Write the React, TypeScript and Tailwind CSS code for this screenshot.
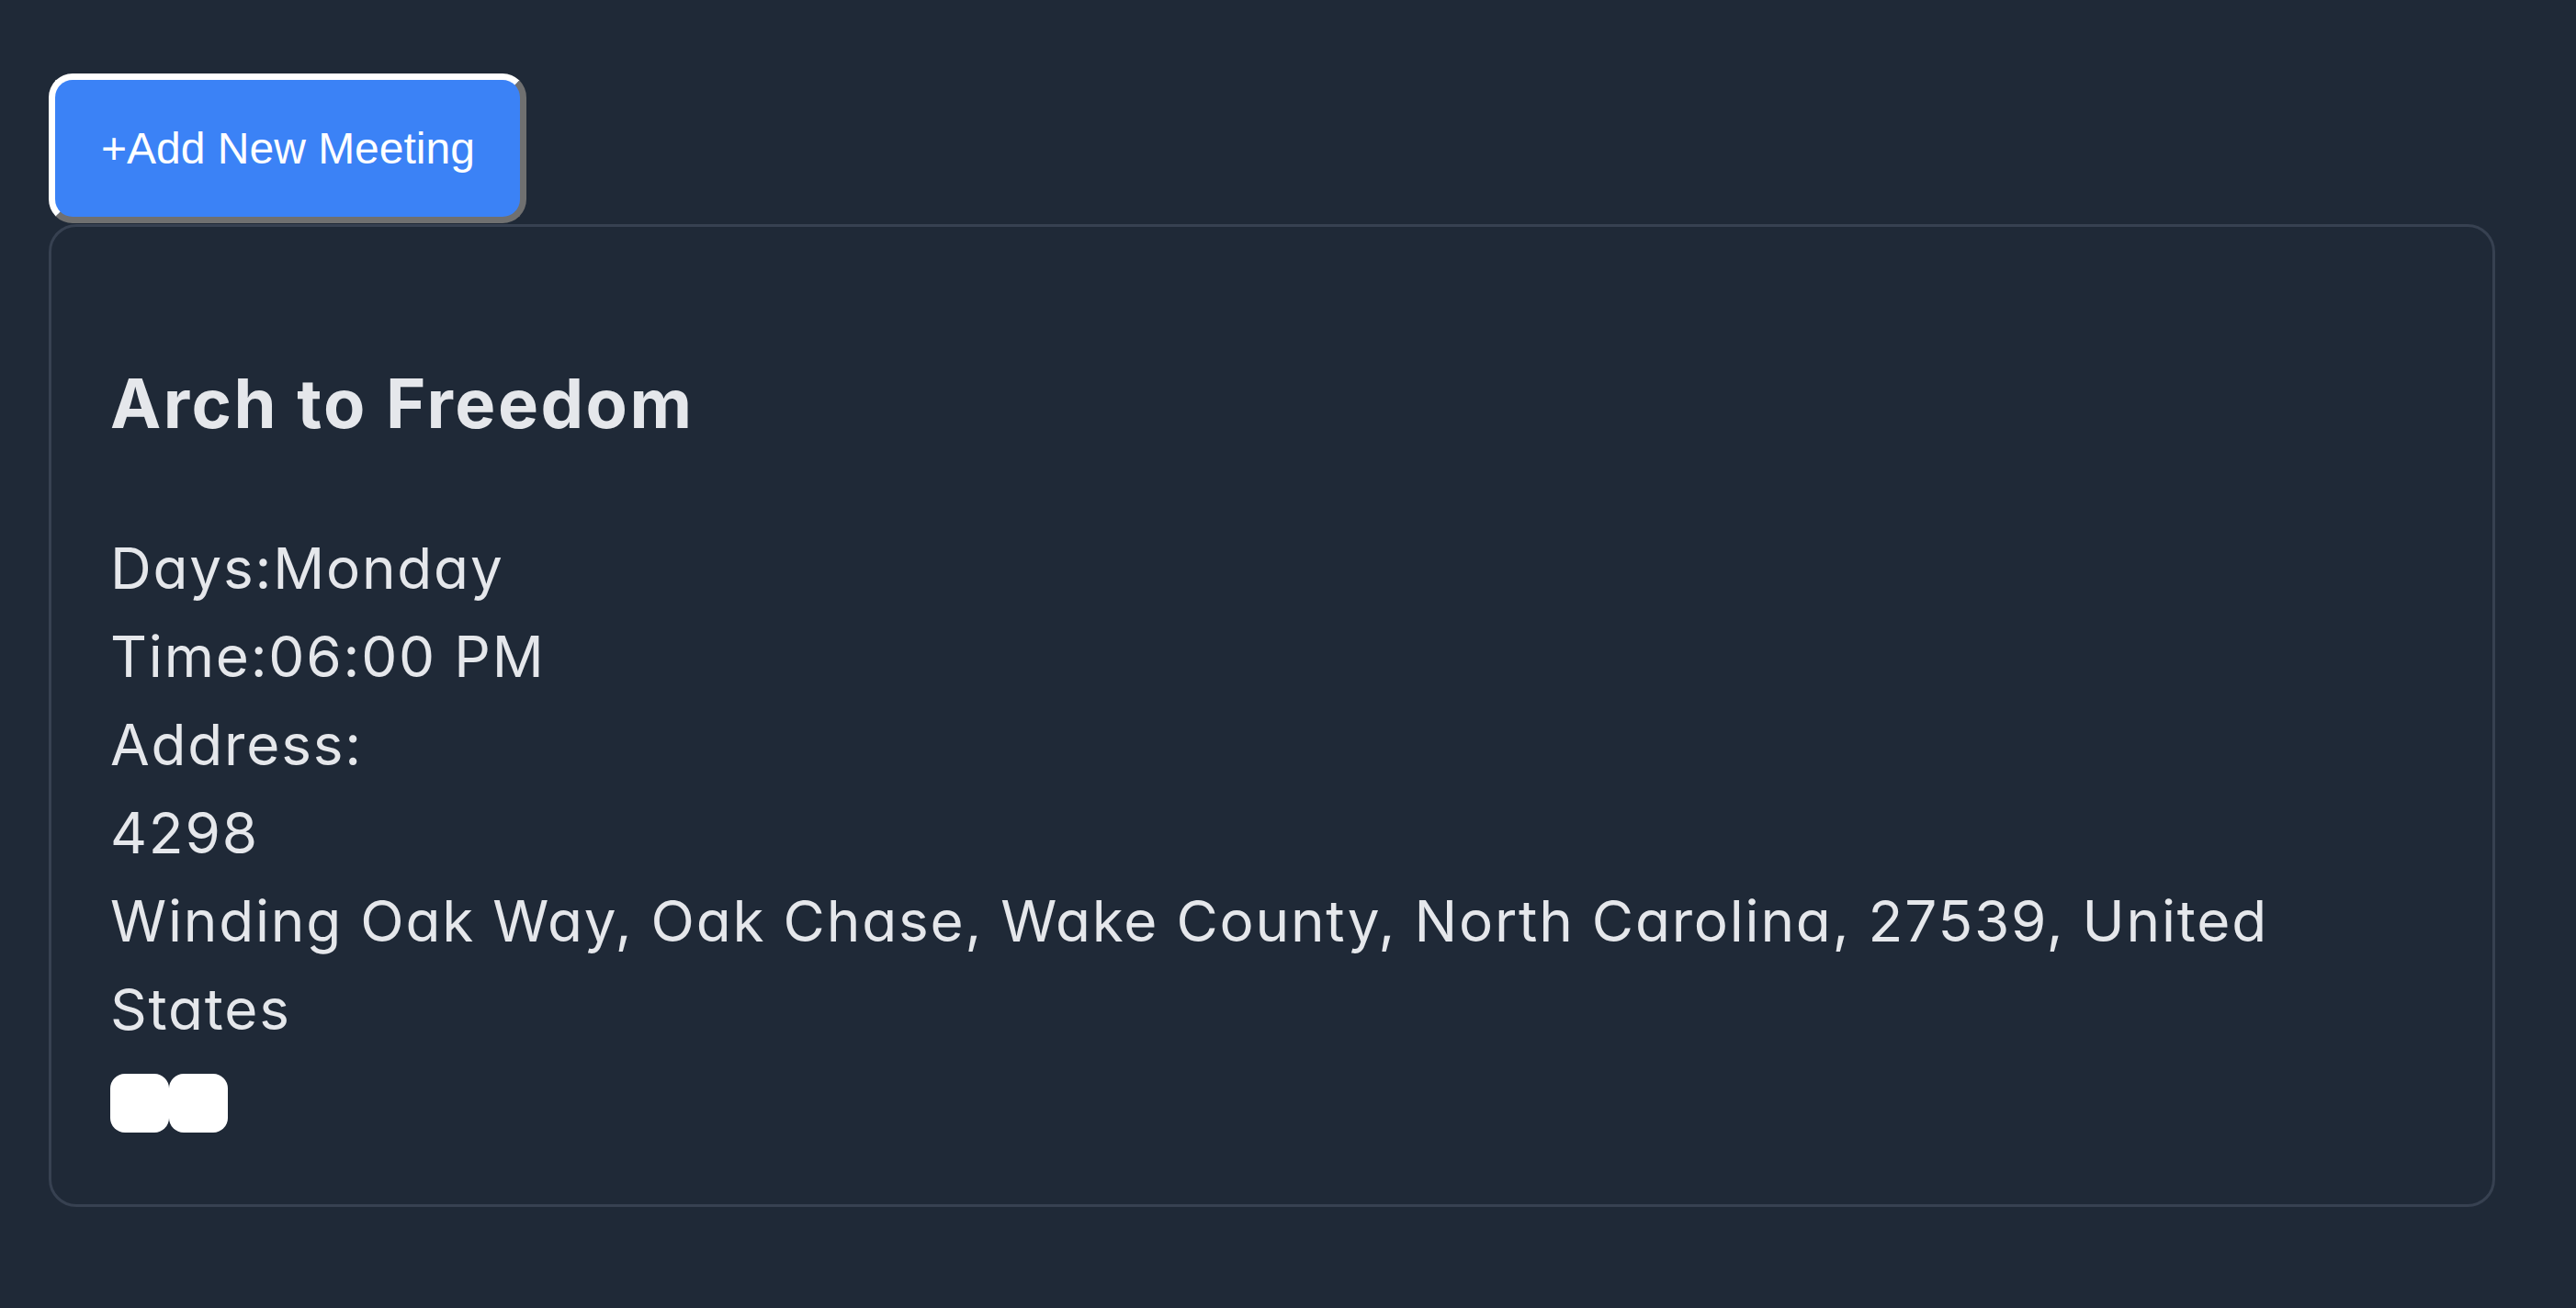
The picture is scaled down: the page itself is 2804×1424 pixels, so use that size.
import React from "react";

export default function App() {
  return (
    <div className="min-h-screen w-full bg-[#1f2937] pl-[53px] pt-[80px] font-['Inter',sans-serif]">
      <button
        type="button"
        className="flex h-[163px] w-[520px] items-center whitespace-nowrap rounded-[26px] border-[7px] border-t-white border-l-white border-r-[#707070] border-b-[#707070] bg-[#3b82f6] pl-[50px] pr-[40px] font-['Liberation_Sans',Arial,sans-serif] text-[48px] leading-[72px] text-white"
      >
        +Add New Meeting
      </button>
      <div className="mt-[1px] w-[2663px] rounded-[30px] border-[3px] border-[#374151] px-[64px] pt-[152px] pb-[78px] text-[#e5e7eb] [font-feature-settings:'cv11'_1]">
        <h2 className="text-[74px] leading-[80px] font-bold tracking-[2.5px]">Arch to Freedom</h2>
        <div className="mt-[92px] text-[62px] leading-[96px] tracking-[1.8px]">
          <div>Days:Monday</div>
          <div>Time:06:00 PM</div>
          <div>Address:</div>
          <div>4298</div>
          <div>Winding Oak Way, Oak Chase, Wake County, North Carolina, 27539, United States</div>
        </div>
        <div className="mt-[22px] flex">
          <button type="button" className="h-[64px] w-[64px] rounded-[16px] bg-white" />
          <button type="button" className="h-[64px] w-[64px] rounded-[16px] bg-white" />
        </div>
      </div>
    </div>
  );
}
